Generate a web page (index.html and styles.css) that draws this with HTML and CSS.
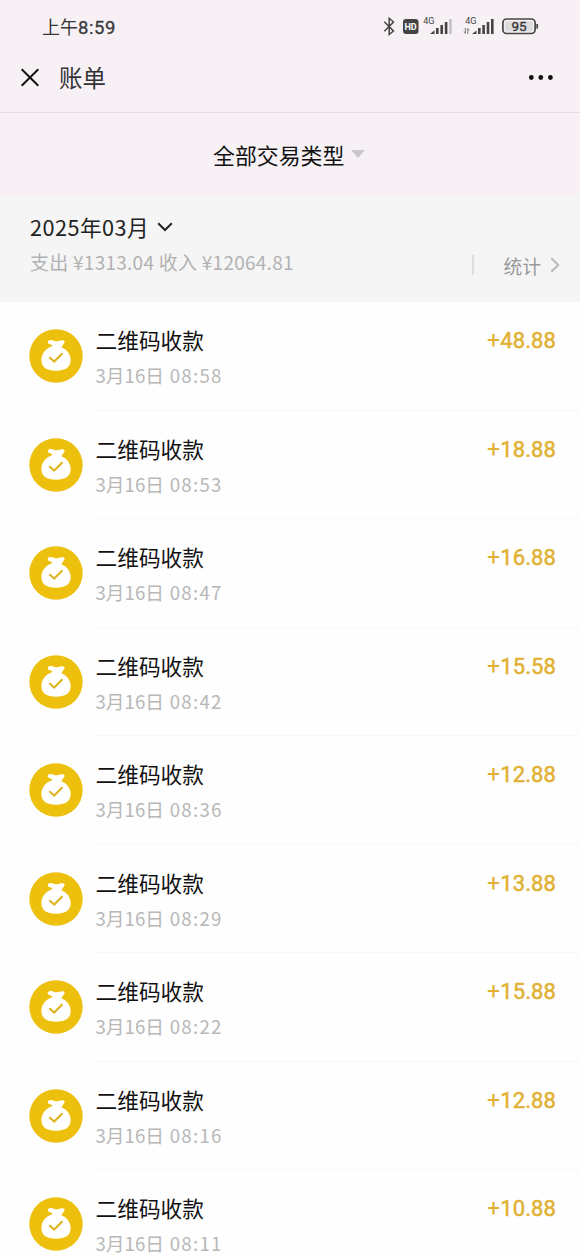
FILE: index.html
```html
<!DOCTYPE html>
<html lang="zh-CN">
<head>
<meta charset="utf-8">
<title>账单</title>
<link rel="stylesheet" href="styles.css">
</head>
<body>
<svg width="0" height="0" class="defs">
  <symbol id="bag" viewBox="0 0 54 54">
    <circle cx="27" cy="27" r="26.7" fill="#ecc00c"/>
    <path d="M19 12.400C20.300 10.300 22.500 10.800 25.500 12C28.500 13 31 10.800 34 11.200C35.600 11.500 36 12.800 35.300 13.800L32.300 18.200C38 20.300 41.700 25.500 41.700 31C41.700 38.500 36 41.700 27 41.700C18 41.700 12.400 38.500 12.400 31C12.400 25.300 16 20 22.500 17.600L23.500 16.300L19.200 14.500C18.500 13.900 18.500 13 19 12.400Z" fill="#fff"/>
    <path d="M20.300 28.200L25.200 32.500L33.500 24.200" fill="none" stroke="#dfb422" stroke-width="2.100"/>
  </symbol>
</svg>
<header class="top">
  <div class="status">
    <span class="clock">上午<b>8:59</b></span>
    <svg class="system" width="160" height="24" viewBox="380 14 160 24">
      <path d="M384.300 21.700L393.500 31L389.200 34.500V18.300L393.500 22L384.300 31.300" fill="none" stroke="#444" stroke-width="1.500"/>
      <rect x="403" y="19" width="15.500" height="15" rx="3" fill="#444"/>
      <text x="404.500" y="30.300" class="hd">HD</text>
      <text x="423.300" y="24" class="net">4G</text>
      <path d="M430 34L434.500 30.300V34ZM436 28h2.600v6H436ZM440.400 25h2.600v9h-2.600ZM444.800 22h2.600v12h-2.600Z" fill="#444"/>
      <path d="M449.200 19h2.500v15h-2.500Z" fill="#c5c0c4"/>
      <text x="465.300" y="24" class="net">4G</text>
      <path d="M465.300 28v5M464 31.500l1.300 2M467.800 34v-5.500l1.500 2" fill="none" stroke="#777" stroke-width="1"/>
      <path d="M472 34L476.500 30.500V34ZM478 28h2.600v6H478ZM482.300 25h2.600v9h-2.600ZM486.700 22h2.600v12h-2.600ZM491 19h2.600v15H491Z" fill="#444"/>
      <rect x="502.900" y="19" width="32.200" height="14.500" rx="3.800" fill="#f7f2f6" stroke="#444" stroke-width="1.700"/>
      <rect x="505" y="21.200" width="28" height="10.200" rx="1.800" fill="#dedddd"/>
      <path d="M537.200 24v4.600" stroke="#444" stroke-width="1.700"/>
      <text x="511.400" y="31" class="pct">95</text>
    </svg>
  </div>
  <div class="nav">
    <svg width="20" height="20" viewBox="0 0 20 20"><path d="M1.700 1.300L18.300 17.700M18.300 1.300L1.700 17.700" stroke="#111" stroke-width="2"/></svg>
    <h1>账单</h1>
    <svg class="more" width="26" height="8" viewBox="0 0 26 8"><circle cx="3.300" cy="3.500" r="2.400"/><circle cx="12.800" cy="3.500" r="2.400"/><circle cx="22.400" cy="3.500" r="2.400"/></svg>
  </div>
</header>
<div class="filter">全部交易类型<svg width="14" height="8" viewBox="0 0 14 8"><path d="M0 0H14L7 8Z" fill="#cbc7ca"/></svg></div>
<section class="summary">
  <div class="totals">
    <div class="month">2025年03月<svg width="16" height="10" viewBox="0 0 16 10"><path d="M1.200 1.200L8 8L14.800 1.200" fill="none" stroke="#222" stroke-width="2"/></svg></div>
    <div class="sums">支出 ¥1313.04 收入 ¥12064.81</div>
  </div>
  <div class="stats">统计<svg width="10" height="16" viewBox="0 0 10 16"><path d="M1.300 1.200L8.300 8L1.300 14.800" fill="none" stroke="#bbb" stroke-width="2"/></svg></div>
</section>
<main class="list">
  <div class="row"><svg class="icon"><use href="#bag"/></svg><div class="body"><div class="info"><h2>二维码收款</h2><p>3月16日 <span>08:58</span></p></div><div class="amount"><i>+</i>48.88</div></div></div>
  <div class="row"><svg class="icon"><use href="#bag"/></svg><div class="body"><div class="info"><h2>二维码收款</h2><p>3月16日 <span>08:53</span></p></div><div class="amount"><i>+</i>18.88</div></div></div>
  <div class="row"><svg class="icon"><use href="#bag"/></svg><div class="body"><div class="info"><h2>二维码收款</h2><p>3月16日 <span>08:47</span></p></div><div class="amount"><i>+</i>16.88</div></div></div>
  <div class="row"><svg class="icon"><use href="#bag"/></svg><div class="body"><div class="info"><h2>二维码收款</h2><p>3月16日 <span>08:42</span></p></div><div class="amount"><i>+</i>15.58</div></div></div>
  <div class="row"><svg class="icon"><use href="#bag"/></svg><div class="body"><div class="info"><h2>二维码收款</h2><p>3月16日 <span>08:36</span></p></div><div class="amount"><i>+</i>12.88</div></div></div>
  <div class="row"><svg class="icon"><use href="#bag"/></svg><div class="body"><div class="info"><h2>二维码收款</h2><p>3月16日 <span>08:29</span></p></div><div class="amount"><i>+</i>13.88</div></div></div>
  <div class="row"><svg class="icon"><use href="#bag"/></svg><div class="body"><div class="info"><h2>二维码收款</h2><p>3月16日 <span>08:22</span></p></div><div class="amount"><i>+</i>15.88</div></div></div>
  <div class="row"><svg class="icon"><use href="#bag"/></svg><div class="body"><div class="info"><h2>二维码收款</h2><p>3月16日 <span>08:16</span></p></div><div class="amount"><i>+</i>12.88</div></div></div>
  <div class="row"><svg class="icon"><use href="#bag"/></svg><div class="body"><div class="info"><h2>二维码收款</h2><p>3月16日 <span>08:11</span></p></div><div class="amount"><i>+</i>10.88</div></div></div>
</main>
</body>
</html>
```

FILE: styles.css
```css
* { box-sizing: border-box; }
html, body { height: 1257px; overflow: hidden; }
body {
  margin: 0;
  display: flex;
  flex-direction: column;
  background: #fefefe;
  font-family: "Noto Sans CJK SC", sans-serif;
  white-space: nowrap;
}
h1, h2, p { margin: 0; font-weight: 400; }
.defs { display: none; }
.top {
  flex: none;
  height: 113px;
  background: #f7f1f6;
  border-bottom: 1px solid #e6e0e5;
}
.status {
  display: flex;
  justify-content: space-between;
  height: 52px;
  padding: 14px 40px 0 42px;
}
.clock { font-size: 18px; line-height: 24px; color: #383838; }
.clock b { font: 400 18.500px/24px Roboto, sans-serif; letter-spacing: 0.6px; -webkit-text-stroke: 0.3px #383838; }
.hd { font: 700 9px Roboto, sans-serif; fill: #fff; }
.net { font: 400 9px Roboto, sans-serif; fill: #444; }
.pct { font: 400 13.500px Roboto, sans-serif; fill: #333; stroke: #333; stroke-width: 0.3px; }
.nav { display: flex; align-items: center; height: 52px; padding: 0 26px 0 20px; }
.nav h1 { margin: -2px 0 0 19px; font-size: 23.500px; line-height: 34px; color: #333; }
.more { margin-left: auto; fill: #111; }
.filter {
  flex: none;
  height: 82px;
  display: flex;
  align-items: center;
  gap: 7px;
  padding: 0 0 0 213px;
  background: #f7f1f6;
  color: #111;
  font-size: 21.900px;
}
.summary {
  flex: none;
  display: flex;
  justify-content: space-between;
  height: 107px;
  padding: 14px 20px 0 30px;
  background: #f5f5f5;
}
.month {
  display: flex;
  align-items: center;
  gap: 8px;
  height: 35px;
  font-size: 21.700px;
  letter-spacing: 0.45px;
  color: #222;
}
.sums { font-size: 19px; line-height: 36px; letter-spacing: 0.26px; color: #b2b2b2; }
.stats {
  display: flex;
  align-items: center;
  gap: 9px;
  height: 20px;
  margin-top: 46px;
  padding-left: 29px;
  border-left: 2px solid #ddd;
  color: #999;
  font-size: 18.800px;
}
.list { flex: none; }
.row { display: flex; height: 108.500px; padding-left: 29px; }
.icon { flex: none; width: 54px; height: 54px; margin-top: 27px; }
.body {
  flex: 1;
  display: flex;
  justify-content: space-between;
  margin-left: 12.500px;
  padding: 21px 24px 0 0;
  border-bottom: 1px solid #f7f7f7;
}
.info h2 { font-size: 21.700px; line-height: 34px; color: #111; }
.info p { font-size: 18.700px; line-height: 36px; color: #b8b8b8; }
.info span { margin-left: 1.500px; letter-spacing: 1.250px; }
.amount { padding-top: 1px; font: 400 22px/34px Roboto, sans-serif; letter-spacing: 0.1px; color: #e1b133; -webkit-text-stroke: 0.5px #e1b133; }
.amount i { font-style: normal; font-size: 23px; -webkit-text-stroke: 0; }
```
